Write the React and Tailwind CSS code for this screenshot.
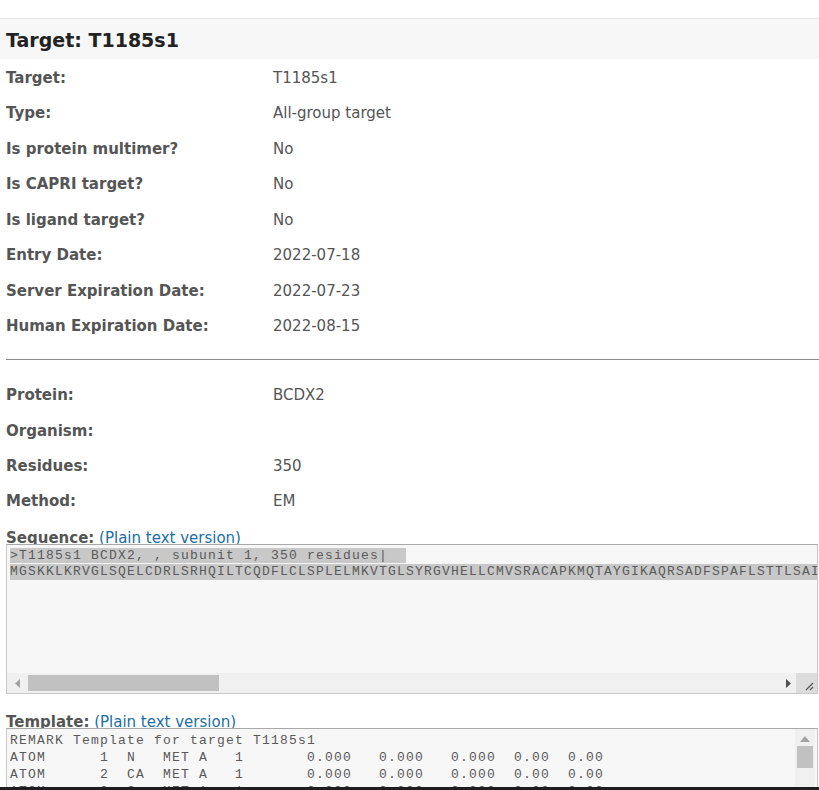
import React from "react";

const info = [
  ["Target:", "T1185s1"],
  ["Type:", "All-group target"],
  ["Is protein multimer?", "No"],
  ["Is CAPRI target?", "No"],
  ["Is ligand target?", "No"],
  ["Entry Date:", "2022-07-18"],
  ["Server Expiration Date:", "2022-07-23"],
  ["Human Expiration Date:", "2022-08-15"],
];

const protein = [
  ["Protein:", "BCDX2"],
  ["Organism:", ""],
  ["Residues:", "350"],
  ["Method:", "EM"],
];

const template = [
  "REMARK Template for target T1185s1",
  "ATOM      1  N   MET A   1       0.000   0.000   0.000  0.00  0.00",
  "ATOM      2  CA  MET A   1       0.000   0.000   0.000  0.00  0.00",
  "ATOM      3  C   MET A   1       0.000   0.000   0.000  0.00  0.00",
];

const mono = { fontFamily: '"Liberation Mono", "Courier New", monospace' };

function Row({ label, value, h }) {
  return (
    <div className={`flex items-center pt-[2px] ${h}`}>
      <div className="w-[267px] font-bold text-[#555]">{label}</div>
      <div className="text-[#555]">{value}</div>
    </div>
  );
}

function BoxLabel({ title }) {
  return (
    <div className="leading-[14px] h-[14px] text-[15px]">
      <span className="font-bold text-[#555]">{title}</span>{" "}
      <a className="text-[#1c6ea4]">(Plain text version)</a>
    </div>
  );
}

export default function App() {
  return (
    <div
      className="h-[790px] w-[819px] flex flex-col overflow-hidden bg-white text-[15px]"
      style={{ fontFamily: '"DejaVu Sans", Verdana, sans-serif' }}
    >
      <div className="flex-1 overflow-hidden">
        <div className="h-[18px]" />
        <div className="border-t border-[#e3e3e3] bg-[#f7f7f7] h-[41px] flex items-center pl-[6px] pt-[2px]">
          <h1 className="text-[19px] font-bold text-[#222]">Target: T1185s1</h1>
        </div>

        <div className="pl-[6px]">
          {info.map(([l, v]) => (
            <Row key={l} label={l} value={v} h="h-[35.5px]" />
          ))}
        </div>

        <div className="mt-[16px] ml-[6px] border-t border-[#8c8c8c]" />

        <div className="pl-[6px] mt-[17px]">
          {protein.map(([l, v]) => (
            <Row key={l} label={l} value={v} h="h-[35.3px]" />
          ))}
        </div>

        <div className="pl-[6px] pt-[13px]">
          <BoxLabel title="Sequence:" />
          <div className="relative mt-[-1px] h-[150px] w-[812px] border border-[#c8c8c8] border-t-[#a8a8a8] bg-[#f7f7f7] flex flex-col">
            <div
              className="flex-1 overflow-hidden pl-[3px] pt-[3px] text-[13px] tracking-[1.2px] leading-[16px] text-[#5a5a5a] whitespace-pre"
              style={mono}
            >
              <div>
                <span className="bg-[#c8c8c8]">{">T1185s1 BCDX2, , subunit 1, 350 residues|  "}</span>
              </div>
              <div className="bg-[#c8c8c8]">
                MGSKKLKRVGLSQELCDRLSRHQILTCQDFLCLSPLELMKVTGLSYRGVHELLCMVSRACAPKMQTAYGIKAQRSADFSPAFLSTTLSAIQ
              </div>
            </div>
            <div className="h-[20px] flex bg-[#f0f0f0]">
              <div className="w-[21px] flex items-center justify-center">
                <svg width="6" height="9" viewBox="0 0 6 9">
                  <path d="M5 0 L0 4.5 L5 9 Z" fill="#a3a3a3" />
                </svg>
              </div>
              <div className="w-[191px] my-[2px] bg-[#c1c1c1]" />
              <div className="flex-1 flex items-center justify-end pr-[5px]">
                <svg width="6" height="9" viewBox="0 0 6 9">
                  <path d="M1 0 L6 4.5 L1 9 Z" fill="#505050" />
                </svg>
              </div>
              <div className="w-[21px] bg-[#dcdcdc] flex items-end justify-end pr-[3px] pb-[2px]">
                <svg width="10" height="10" viewBox="0 0 10 10">
                  <path d="M9 2 L2 9 M9 6 L6 9" stroke="#555" strokeWidth="1.2" />
                </svg>
              </div>
            </div>
          </div>
        </div>

        <div className="pl-[6px] pt-[21px]">
          <BoxLabel title="Template:" />
          <div className="relative mt-[-1px] h-[120px] w-[812px] border border-[#c8c8c8] border-t-[#a8a8a8] bg-[#f7f7f7] flex">
            <div
              className="flex-1 overflow-hidden pl-[3px] pt-[3px] text-[13px] tracking-[1.2px] leading-[17px] text-[#5a5a5a] whitespace-pre"
              style={mono}
            >
              {template.map((t) => (
                <div key={t}>{t}</div>
              ))}
            </div>
            <div className="w-[20px] bg-[#f0f0f0] flex flex-col items-center pt-[7px] mr-[2px]">
              <svg width="10" height="6" viewBox="0 0 10 6">
                <path d="M0 6 L5 0 L10 6 Z" fill="#a3a3a3" />
              </svg>
              <div className="mt-[4px] w-[16px] h-[22px] bg-[#c1c1c1]" />
            </div>
          </div>
        </div>
      </div>
      <div className="h-[3px] bg-[#1e1e1e]" />
    </div>
  );
}
